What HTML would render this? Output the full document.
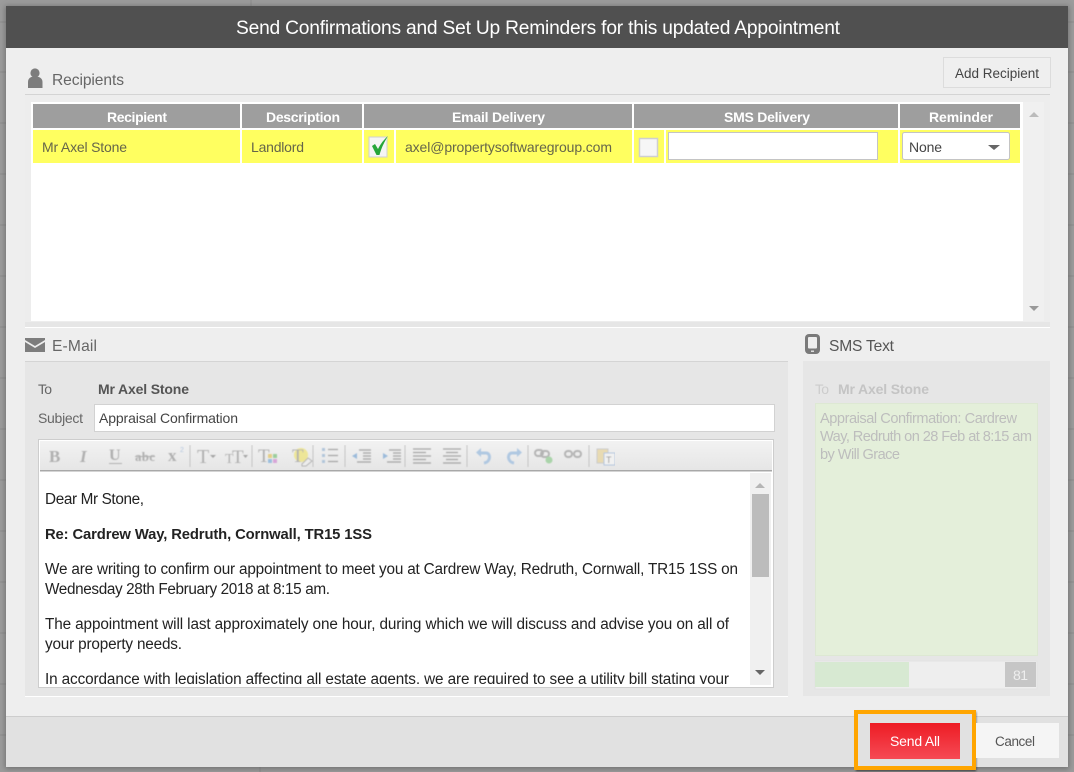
<!DOCTYPE html>
<html><head><meta charset="utf-8"><title>Send Confirmations</title>
<style>
html,body{margin:0;padding:0;width:1074px;height:772px;overflow:hidden;background:#9c9c9c}
svg{display:block}
text{font-family:"Liberation Sans",sans-serif;font-size:14px;fill:#555;white-space:pre}
.h{font-weight:bold;fill:#fff;font-size:14px}
.b{fill:#222;font-size:15.3px}
.g{fill:#bdbdbd;font-size:14.600px}
.t{font-family:"Liberation Serif",serif;fill:#a6a6a6;font-weight:bold}
</style></head><body>
<svg width="1074" height="772" viewBox="0 0 1074 772" xmlns="http://www.w3.org/2000/svg">
<defs>
<linearGradient id="red" x1="0" y1="0" x2="0" y2="1"><stop offset="0" stop-color="#ed1c24"/><stop offset="1" stop-color="#f64a55"/></linearGradient>
<linearGradient id="tb" x1="0" y1="0" x2="0" y2="1"><stop offset="0" stop-color="#f2f2f2"/><stop offset="1" stop-color="#e6e6e6"/></linearGradient>
<filter id="s" x="-5%" y="-5%" width="110%" height="110%"><feGaussianBlur stdDeviation="3"/></filter>
<filter id="s2" x="-20%" y="-20%" width="140%" height="140%"><feGaussianBlur stdDeviation="1"/></filter>
<filter id="soft" x="0" y="0" width="100%" height="100%"><feGaussianBlur stdDeviation="0.45"/></filter>
</defs>
<rect width="1074" height="772" fill="#9c9c9c"/>
<path d="M251 0V6M260 767V772M0 22H6M0 72H6M0 123H6M0 174H6M0 225H6M0 276H6M0 327H6M0 378H6M0 429H6M0 480H6M0 531H6M0 582H6M0 633H6M0 684H6M0 735H6M1068 22H1074M1068 72H1074M1068 123H1074M1068 174H1074M1068 225H1074M1068 276H1074M1068 327H1074M1068 378H1074M1068 429H1074M1068 480H1074M1068 531H1074M1068 582H1074M1068 633H1074M1068 684H1074M1068 735H1074" stroke="#8c8c8c" stroke-width="1"/>
<rect x="5" y="6" width="1064" height="763" fill="#555" filter="url(#s)" opacity=".6"/>
<rect x="6" y="6" width="1062" height="761" fill="#eee"/>
<rect x="6" y="6" width="1062" height="42" fill="#505050"/>
<text x="236" y="34" textLength="604" lengthAdjust="spacing" style="fill:#fff;font-size:19.2px">Send Confirmations and Set Up Reminders for this updated Appointment</text>

<!-- Recipients -->
<circle cx="35" cy="73" r="4.6" fill="#7d7d7d"/>
<path d="M28 88v-6c0-4 3-5.500 7-5.500s7.500 1.500 7.500 5.500v6z" fill="#7d7d7d"/>
<text x="52" y="85" textLength="72" style="font-size:15.6px;fill:#666">Recipients</text>
<rect x="943.500" y="57.500" width="107" height="30" fill="#efefef" stroke="#dcdcdc"/>
<text x="955" y="78" textLength="84" style="font-size:13.500px;fill:#444">Add Recipient</text>
<rect x="25" y="94" width="1025" height="1" fill="#d4d4d4"/>
<rect x="25" y="95" width="1025" height="232" fill="#ededed"/>
<rect x="25" y="322" width="1025" height="5" fill="#e6e6e6"/>
<rect x="25" y="327" width="1025" height="1" fill="#fff"/>
<rect x="31" y="102" width="992" height="219" fill="#fff"/>
<rect x="1023" y="102" width="21" height="219" fill="#f0f0f0"/>
<path d="M1029 117l5-5 5 5z" fill="#bbb"/><path d="M1029 306l5 5 5-5z" fill="#999"/>

<g fill="#9e9e9e">
<rect x="33" y="104" width="207" height="24"/><rect x="242" y="104" width="120" height="24"/><rect x="364" y="104" width="268" height="24"/><rect x="634" y="104" width="264" height="24"/><rect x="900" y="104" width="120" height="24"/>
</g>
<text class="h" x="107" y="122" textLength="60">Recipient</text>
<text class="h" x="266" y="122" textLength="74">Description</text>
<text class="h" x="452" y="122" textLength="93">Email Delivery</text>
<text class="h" x="724" y="122" textLength="86">SMS Delivery</text>
<text class="h" x="929" y="122" textLength="64">Reminder</text>
<g fill="#ffff60">
<rect x="33" y="130" width="207" height="33"/><rect x="242" y="130" width="120" height="33"/><rect x="364" y="130" width="30" height="33"/><rect x="396" y="130" width="236" height="33"/><rect x="634" y="130" width="30" height="33"/><rect x="666" y="130" width="232" height="33"/><rect x="900" y="130" width="120" height="33"/>
</g>
<text x="42" y="152" textLength="85" style="fill:#66664a">Mr Axel Stone</text>
<text x="251" y="152" textLength="53" style="fill:#66664a">Landlord</text>
<text x="405" y="152" textLength="207" style="fill:#66664a">axel@propertysoftwaregroup.com</text>
<rect x="369" y="137" width="18" height="20" fill="#f5f5f5" stroke="#d0d0d0"/>
<path d="M372 146l3-2 3 5c2.500-5 5.500-9 10-13-3 5-6.500 11-8.500 19h-3z" fill="#27a63a"/>
<rect x="639.500" y="138.500" width="18" height="18" fill="#f6f6f6" stroke="#cfcfcf" stroke-width="1.500"/>
<rect x="668.500" y="132.500" width="209" height="27" fill="#fff" stroke="#c4c4c4"/>
<rect x="902.500" y="132.500" width="107" height="27" rx="2" fill="#fff" stroke="#c4c4c4"/>
<text x="909" y="152" textLength="33" style="fill:#444">None</text>
<path d="M988 145h12l-6 5z" fill="#666"/>

<!-- E-mail -->
<path d="M25 338h20v2l-10 6-10-6z" fill="#7d7d7d"/><path d="M25 342l10 6 10-6v10H25z" fill="#7d7d7d"/>
<text x="52" y="351" textLength="45" style="font-size:15.6px;fill:#666">E-Mail</text>
<rect x="25" y="361" width="763" height="1" fill="#d4d4d4"/>
<rect x="25" y="362" width="763" height="334" fill="#e6e6e6"/>
<rect x="25" y="696" width="763" height="1" fill="#fff"/>
<text x="38" y="394" textLength="14" style="fill:#666">To</text>
<text x="98" y="394" textLength="91" style="font-weight:bold;fill:#555">Mr Axel Stone</text>
<text x="38" y="423" textLength="45" style="fill:#666">Subject</text>
<rect x="94.500" y="404.500" width="680" height="27" fill="#fff" stroke="#d2d2d2"/>
<text x="99" y="423" textLength="139" style="fill:#444">Appraisal Confirmation</text>

<rect x="38.500" y="439.500" width="735" height="248" fill="#fff" stroke="#cdcdcd"/>
<rect x="40" y="441" width="732" height="29" fill="url(#tb)"/>
<rect x="40" y="470" width="732" height="1.500" fill="#a8a8a8"/>
<g opacity=".85" filter="url(#soft)">
<text class="t" x="49" y="462" style="font-size:17px">B</text>
<text class="t" x="80" y="462" style="font-size:17px;font-style:italic">I</text>
<text class="t" x="109" y="460" style="font-size:16px">U</text><rect x="109" y="463" width="13" height="1" fill="#a6a6a6"/>
<text class="t" x="135" y="461" textLength="20" style="font-size:13px">abc</text><rect x="135" y="456" width="20" height="1" fill="#a6a6a6"/>
<text class="t" x="168" y="461" style="font-size:17px">x</text><text x="180" y="452" style="font-size:7px;fill:#a9bfdc">2</text>
<text class="t" x="197" y="463" style="font-size:20px;font-weight:normal">T</text><path d="M210 455h6l-3 3z" fill="#999"/>
<text class="t" x="225" y="463" style="font-size:14px;font-weight:normal">T</text><text class="t" x="232" y="463" style="font-size:19px;font-weight:normal">T</text><path d="M243 455h5l-2.500 3z" fill="#999"/>
<text class="t" x="258" y="462" style="font-size:19px;font-weight:normal">T</text>
<rect x="268" y="454" width="4" height="4" fill="#e3c977"/><rect x="273" y="454" width="4" height="4" fill="#8fc98f"/><rect x="268" y="459" width="4" height="4" fill="#8fb8dc"/><rect x="273" y="459" width="4" height="4" fill="#d59bd5"/>
<circle cx="301" cy="455" r="7" fill="#eee58a"/>
<text class="t" x="292" y="462" style="font-size:19px;font-weight:normal">T</text>
<path d="M302 464l6-6 4 3-6 5h-4z" fill="#eee" stroke="#aaa"/>
<g fill="#a8c0d8"><rect x="322" y="448" width="3" height="3"/><rect x="322" y="454" width="3" height="3"/><rect x="322" y="460" width="3" height="3"/></g>
<path d="M328 449.500h10M328 455.500h10M328 461.500h10" stroke="#999" stroke-width="1.200"/>
<path d="M359 450h12M363 453h8M363 456h8M363 459h8M357 462h14" stroke="#999" stroke-width="1.300"/><path d="M352 456l5-3v6z" fill="#8db2d8"/>
<path d="M389 450h12M393 453h8M393 456h8M393 459h8M387 462h14" stroke="#999" stroke-width="1.300"/><path d="M388 456l-5-3v6z" fill="#8db2d8"/>
<path d="M413 449h18M413 452.500h13M413 456h18M413 459.500h13M413 463h18" stroke="#999" stroke-width="1.300"/>
<path d="M443 449h18M446 452.500h12M443 456h18M446 459.500h12M443 463h18" stroke="#999" stroke-width="1.300"/>
<path d="M478 453h8c5 0 5 9-2 10" fill="none" stroke="#a6c2e0" stroke-width="3"/><path d="M481 448v9l-5-4.500z" fill="#a6c2e0"/>
<path d="M520 453h-8c-5 0-5 9 2 10" fill="none" stroke="#a6c2e0" stroke-width="3"/><path d="M517 448v9l5-4.500z" fill="#a6c2e0"/>
<rect x="535" y="450" width="8" height="6" rx="3" fill="none" stroke="#aaa" stroke-width="2"/><rect x="541" y="451" width="8" height="6" rx="3" fill="none" stroke="#aaa" stroke-width="2"/><circle cx="549" cy="460" r="3.500" fill="#9fd09f"/>
<rect x="565" y="451" width="7" height="6" rx="3" fill="none" stroke="#aaa" stroke-width="2"/><rect x="574" y="451" width="7" height="6" rx="3" fill="none" stroke="#aaa" stroke-width="2"/>
<rect x="597" y="449" width="11" height="14" fill="#e8d8a8" stroke="#c6c6c6"/><rect x="604" y="453" width="11" height="12" fill="#f3f3f3" stroke="#a9bfdc"/>
<text x="606" y="463" style="font-size:9px;fill:#888">T</text>
<path d="M190 445v22M252 445v22M313 445v22M345 445v22M405 445v22M467 445v22M528 445v22M589 445v22" stroke="#bcbcbc"/>
</g>

<svg x="40" y="472" width="712" height="212" viewBox="40 472 712 212">
<text class="b" x="45" y="504" textLength="99">Dear Mr Stone,</text>
<text class="b" x="45" y="539" textLength="327" style="font-weight:bold;font-size:14.8px">Re: Cardrew Way, Redruth, Cornwall, TR15 1SS</text>
<text class="b" x="45" y="574" textLength="693">We are writing to confirm our appointment to meet you at Cardrew Way, Redruth, Cornwall, TR15 1SS on</text>
<text class="b" x="45" y="594" textLength="285">Wednesday 28th February 2018 at 8:15 am.</text>
<text class="b" x="45" y="629" textLength="684">The appointment will last approximately one hour, during which we will discuss and advise you on all of</text>
<text class="b" x="45" y="649" textLength="137">your property needs.</text>
<text class="b" x="45" y="684" textLength="684">In accordance with legislation affecting all estate agents, we are required to see a utility bill stating your</text>
</svg>
<rect x="750" y="473" width="21" height="212" fill="#f0f0f0"/>
<rect x="752" y="494" width="17" height="83" fill="#bcbcbc"/>
<path d="M755 488l5-5 5 5z" fill="#b5b5b5"/><path d="M755 670l5 5 5-5z" fill="#666"/>

<!-- SMS -->
<rect x="805" y="334" width="15" height="20" rx="4" fill="#7a7a7a"/><rect x="808" y="337" width="9" height="11.500" rx="1" fill="#eee"/><rect x="811" y="350.500" width="3" height="1.500" fill="#ddd"/>
<text x="829" y="351" textLength="65" style="font-size:15.6px;fill:#555">SMS Text</text>
<rect x="803" y="361" width="247" height="335" fill="#e6e6e6"/>
<text x="815" y="394" textLength="14" style="fill:#ccc">To</text>
<text x="838" y="394" textLength="91" style="font-weight:bold;fill:#c4c4c4">Mr Axel Stone</text>
<rect x="815.500" y="403.500" width="222" height="252" fill="#e4efda" stroke="#dde8d3"/>
<text class="g" x="820" y="423" textLength="197">Appraisal Confirmation: Cardrew</text>
<text class="g" x="820" y="441" textLength="212">Way, Redruth on 28 Feb at 8:15 am</text>
<text class="g" x="820" y="459" textLength="80">by Will Grace</text>
<rect x="815" y="661" width="222" height="28" fill="#eee" stroke="#e2e2e2"/>
<rect x="815" y="662" width="94" height="25" fill="#d7e9d2"/>
<rect x="1005" y="662" width="31" height="25" fill="#c6c6c6"/>
<text x="1013" y="680" textLength="15" style="fill:#eee">81</text>

<!-- Footer -->
<rect x="6" y="716" width="1062" height="51" fill="#e1e1e1"/>
<rect x="6" y="716" width="1062" height="1" fill="#cdcdcd"/>
<rect x="857" y="713" width="118" height="57" fill="none" stroke="#222" stroke-width="2" filter="url(#s2)" opacity=".85"/>
<rect x="856" y="712" width="118" height="56" fill="#e1e1e1" stroke="#ffa500" stroke-width="4"/>
<rect x="870" y="723" width="90" height="36" fill="url(#red)"/>
<text x="890" y="746" textLength="50" style="fill:#fff;font-size:14px">Send All</text>
<rect x="976" y="723" width="83" height="35" fill="#f5f5f5"/>
<text x="995" y="746" textLength="40" style="fill:#555;font-size:13.500px">Cancel</text>
</svg>
</body></html>
